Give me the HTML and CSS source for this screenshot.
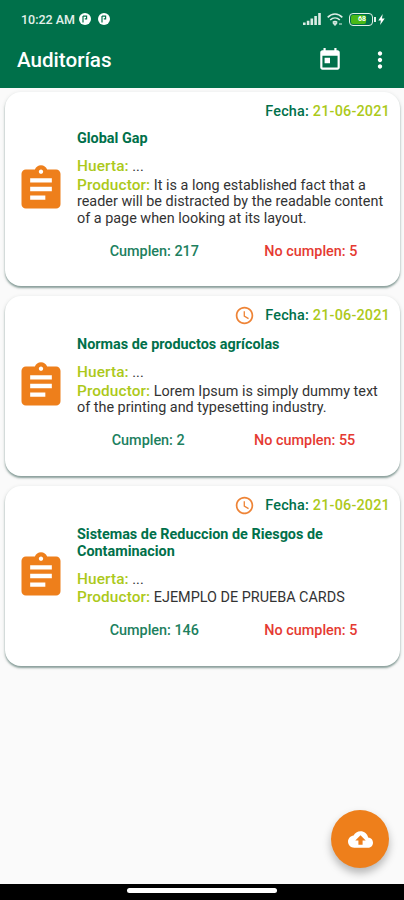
FILE: index.html
```html
<!DOCTYPE html>
<html lang="es">
<head>
    <meta charset="UTF-8" />
    <meta name="viewport" content="width=device-width, initial-scale=1" />
    <title>Auditorías</title>
    <link rel="stylesheet" href="styles.css">
</head>
<body>

<header class="header">
    <div class="status-bar">
        <span class="time">10:22 AM</span>
        <svg class="notice" viewBox="0 0 12 12"><circle cx="6" cy="6" r="6" fill="#fff"/><path d="M4 9.5V3M4 3.2h3.6v2.6H5.8" fill="none" stroke="#00704a" stroke-width="1.2"/></svg>
        <svg class="notice second" viewBox="0 0 12 12"><circle cx="6" cy="6" r="6" fill="#fff"/><path d="M4 9.5V3M4 3.2h3.6v2.6H5.8" fill="none" stroke="#00704a" stroke-width="1.2"/></svg>
        <svg class="signal" viewBox="0 0 18 12" fill="#dcece5"><path d="M0 9.5h2.6V12H0zM3.8 7.8h2.6V12H3.8zM7.5 5.6h2.6V12H7.5zM11.3 3h2.6v9h-2.6zM15.2 0h2.6v12h-2.6z"/></svg>
        <svg class="wifi" viewBox="0 0 16 13" fill="none" stroke="#dcece5" stroke-width="1.6"><path d="M.7 4.4C5-.1 11-.1 15.3 4.4M3.2 7c2.8-2.7 6.8-2.7 9.6 0M5.7 9.5c1.5-1.2 3.1-1.2 4.6 0"/><path d="M6 10.2h4L8 12.5zM12 11h3" fill="#dcece5" stroke-width="1"/></svg>
        <span class="battery"><span class="level">68</span></span>
        <svg class="bolt" viewBox="0 0 7 12"><path d="M4.8 0 0 7h2.8L2 12l5-7H4z" fill="#fff"/></svg>
    </div>
    <div class="app-bar">
        <h1>Auditorías</h1>
        <svg class="calendar" viewBox="0 0 24 24" fill="#fff"><path d="M19 3h-1V1h-2v2H8V1H6v2H5c-1.11 0-1.99.9-1.99 2L3 19c0 1.1.89 2 2 2h14c1.1 0 2-.9 2-2V5c0-1.1-.9-2-2-2zm0 16H5V8h14v11zM7 10h5v5H7z"/></svg>
        <svg class="more" viewBox="0 0 24 24" fill="#fff"><path d="M12 8c1.1 0 2-.9 2-2s-.9-2-2-2-2 .9-2 2 .9 2 2 2zm0 2c-1.1 0-2 .9-2 2s.9 2 2 2 2-.9 2-2-.9-2-2-2zm0 6c-1.1 0-2 .9-2 2s.9 2 2 2 2-.9 2-2-.9-2-2-2z"/></svg>
    </div>
</header>

<main class="list">
    <article class="card">
        <svg class="clipboard" viewBox="0 0 24 24"><path d="M19 3h-4.18C14.4 1.84 13.3 1 12 1c-1.3 0-2.4.84-2.82 2H5c-1.1 0-2 .9-2 2v14c0 1.1.9 2 2 2h14c1.1 0 2-.9 2-2V5c0-1.1-.9-2-2-2zm-7 0c.55 0 1 .45 1 1s-.45 1-1 1-1-.45-1-1 .45-1 1-1zm2 14H7v-2h7v2zm3-4H7v-2h10v2zm0-4H7V7h10v2z"/></svg>
        <div class="info">
            <div class="date">
                <span>Fecha: <b>21-06-2021</b></span>
            </div>
            <h2>Global Gap</h2>
            <p><b>Huerta:</b> ...</p>
            <p><b>Productor:</b> It is a long established fact that a reader will be distracted by the readable content of a page when looking at its layout.</p>
            <div class="stats">
                <span class="ok">Cumplen: 217</span>
                <span class="fail">No cumplen: 5</span>
            </div>
        </div>
    </article>

    <article class="card">
        <svg class="clipboard" viewBox="0 0 24 24"><path d="M19 3h-4.18C14.4 1.84 13.3 1 12 1c-1.3 0-2.4.84-2.82 2H5c-1.1 0-2 .9-2 2v14c0 1.1.9 2 2 2h14c1.1 0 2-.9 2-2V5c0-1.1-.9-2-2-2zm-7 0c.55 0 1 .45 1 1s-.45 1-1 1-1-.45-1-1 .45-1 1-1zm2 14H7v-2h7v2zm3-4H7v-2h10v2zm0-4H7V7h10v2z"/></svg>
        <div class="info">
            <div class="date pending">
                <svg class="clock" viewBox="0 0 24 24"><path d="M11.99 2C6.47 2 2 6.48 2 12s4.47 10 9.99 10C17.52 22 22 17.52 22 12S17.52 2 11.99 2zM12 20c-4.42 0-8-3.58-8-8s3.58-8 8-8 8 3.58 8 8-3.58 8-8 8zm.5-13H11v6l5.25 3.15.75-1.23-4.5-2.67z"/></svg>
                <span>Fecha: <b>21-06-2021</b></span>
            </div>
            <h2>Normas de productos agrícolas</h2>
            <p><b>Huerta:</b> ...</p>
            <p><b>Productor:</b> Lorem Ipsum is simply dummy text of the printing and typesetting industry.</p>
            <div class="stats">
                <span class="ok">Cumplen: 2</span>
                <span class="fail">No cumplen: 55</span>
            </div>
        </div>
    </article>

    <article class="card">
        <svg class="clipboard" viewBox="0 0 24 24"><path d="M19 3h-4.18C14.4 1.84 13.3 1 12 1c-1.3 0-2.4.84-2.82 2H5c-1.1 0-2 .9-2 2v14c0 1.1.9 2 2 2h14c1.1 0 2-.9 2-2V5c0-1.1-.9-2-2-2zm-7 0c.55 0 1 .45 1 1s-.45 1-1 1-1-.45-1-1 .45-1 1-1zm2 14H7v-2h7v2zm3-4H7v-2h10v2zm0-4H7V7h10v2z"/></svg>
        <div class="info">
            <div class="date pending">
                <svg class="clock" viewBox="0 0 24 24"><path d="M11.99 2C6.47 2 2 6.48 2 12s4.47 10 9.99 10C17.52 22 22 17.52 22 12S17.52 2 11.99 2zM12 20c-4.42 0-8-3.58-8-8s3.58-8 8-8 8 3.58 8 8-3.58 8-8 8zm.5-13H11v6l5.25 3.15.75-1.23-4.5-2.67z"/></svg>
                <span>Fecha: <b>21-06-2021</b></span>
            </div>
            <h2>Sistemas de Reduccion de Riesgos de Contaminacion</h2>
            <p><b>Huerta:</b> ...</p>
            <p><b>Productor:</b> EJEMPLO DE PRUEBA CARDS</p>
            <div class="stats">
                <span class="ok">Cumplen: 146</span>
                <span class="fail">No cumplen: 5</span>
            </div>
        </div>
    </article>
</main>

<button class="upload" aria-label="Subir">
    <svg viewBox="0 0 24 24" fill="#fff"><path d="M19.35 10.04C18.67 6.59 15.64 4 12 4 9.11 4 6.6 5.64 5.35 8.04 2.34 8.36 0 10.91 0 14c0 3.31 2.69 6 6 6h13c2.76 0 5-2.24 5-5 0-2.64-2.05-4.78-4.65-4.96zM14 13v4h-4v-4H7l5-5 5 5h-3z"/></svg>
</button>

<footer class="nav-bar"><span class="handle"></span></footer>

</body>
</html>
```

FILE: styles.css
```css
* {
    box-sizing: border-box;
}
body {
    margin: 0;
    height: 900px;
    display: flex;
    flex-direction: column;
    overflow: hidden;
    background-color: #fafafa;
    font-family: Roboto, "Liberation Sans", sans-serif;
    font-size: 14.4px;
    color: #333;
}
h1, h2, p {
    margin: 0;
}
svg {
    display: block;
    flex: none;
}
.header {
    height: 88px;
    background-color: #00704a;
    color: #fff;
}
/* Barra de estado */
.status-bar {
    display: flex;
    align-items: center;
    height: 38px;
    padding: 0 19px 0 21px;
}
.time {
    font-size: 12.5px;
    font-weight: 500;
    color: #e3f0ea;
}
.notice {
    width: 12px;
    height: 12px;
    margin-left: 4px;
}
.second {
    margin-left: 7px;
}
.signal {
    width: 18px;
    height: 12px;
    margin-left: auto;
}
.wifi {
    width: 16px;
    height: 13px;
    margin-left: 6px;
}
.battery {
    position: relative;
    width: 24px;
    height: 13px;
    margin-left: 6px;
    padding: 1px;
    border: 1.5px solid #e3f0ea;
    border-radius: 4px;
}
.battery::after {
    content: "";
    position: absolute;
    right: -3.5px;
    top: 3px;
    width: 2px;
    height: 5px;
    background-color: #e3f0ea;
}
.level {
    display: block;
    width: 15px;
    height: 9px;
    border-radius: 2px;
    background-color: #49b817;
    color: #fff;
    font-size: 7px;
    font-weight: bold;
    line-height: 9px;
    text-align: right;
}
.bolt {
    width: 7px;
    height: 11px;
    margin-left: 5px;
}
.app-bar {
    display: flex;
    align-items: center;
    height: 44px;
    padding: 0 11px 0 17px;
}
.app-bar h1 {
    flex: 1;
    font-size: 20.6px;
    font-weight: 500;
}
.calendar {
    width: 26px;
    height: 26px;
    margin-right: 24px;
}
.more {
    width: 26px;
    height: 26px;
}
/* Tarjetas */
.list {
    flex: 1;
    display: flex;
    flex-direction: column;
    gap: 10px;
    padding: 4px 4px 0 5px;
}
.card {
    display: flex;
    align-items: center;
    height: 180px;
    padding: 0 11px 0 10px;
    border-radius: 16px;
    background-color: #fff;
    box-shadow: 0 2px 2px rgba(0, 50, 40, 0.4), 0 1px 4px rgba(0, 50, 40, 0.12);
}
.card:first-child {
    height: 194px;
}
.clipboard {
    width: 52px;
    height: 52px;
    fill: #ee7f1b;
}
.info {
    align-self: stretch;
    flex: 1;
    margin-left: 10px;
    line-height: 16.7px;
}
.date {
    display: flex;
    justify-content: flex-end;
    align-items: center;
    height: 17px;
    margin-top: 11.5px;
    margin-right: -1px;
    color: #00704a;
    font-weight: 500;
    letter-spacing: 0.2px;
}
.pending {
    height: 21px;
    margin-top: 9.5px;
}
.date b {
    color: #acc91a;
    font-weight: 500;
}
.clock {
    width: 21px;
    height: 21px;
    margin-right: 10px;
    margin-bottom: 2px;
    fill: #ee8437;
}
.card h2 {
    margin: 10.3px 0 9.3px;
    color: #00704a;
    font-size: 14.4px;
    font-weight: bold;
    line-height: 16.7px;
}
.card p b {
    color: #acc91a;
    font-size: 15.4px;
    font-weight: 500;
    line-height: 18.5px;
    letter-spacing: 0.1px;
}
.stats {
    display: flex;
    justify-content: space-around;
    margin-top: 16.5px;
    margin-right: -1px;
    font-weight: 500;
}
.ok {
    color: #207f5e;
}
.fail {
    color: #e53a32;
}
.upload {
    position: absolute;
    left: 331px;
    top: 810px;
    display: flex;
    align-items: center;
    justify-content: center;
    width: 58px;
    height: 58px;
    padding: 0;
    border: 0;
    border-radius: 50%;
    background-color: #ee7f1b;
    box-shadow: 0 5px 8px rgba(0, 0, 0, 0.28);
}
.upload svg {
    width: 25px;
    height: 25px;
}
/* Barra de navegación */
.nav-bar {
    display: flex;
    justify-content: center;
    height: 16px;
    padding-top: 4px;
    background-color: #000;
}
.handle {
    width: 150px;
    height: 5px;
    border-radius: 3px;
    background-color: #fff;
}
```
